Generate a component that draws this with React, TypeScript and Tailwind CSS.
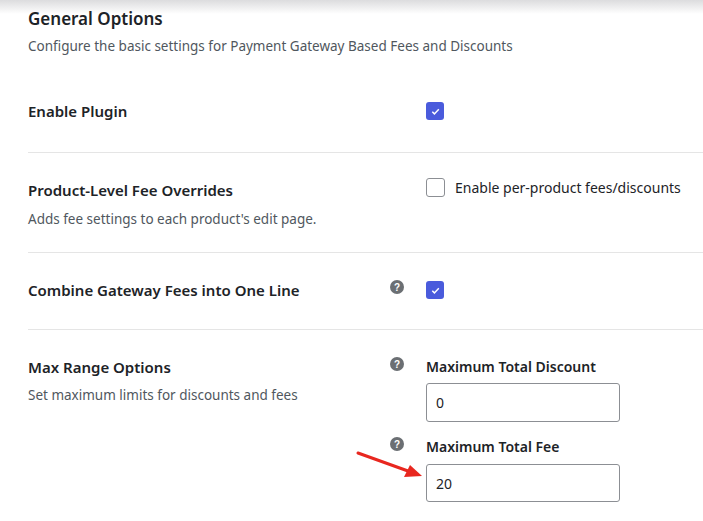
const Help = () => (
  <svg width="14" height="14" viewBox="0 0 14 14" className="shrink-0">
    <circle cx="7" cy="7" r="7" fill="#6b6f73" />
    <text x="7" y="10.5" textAnchor="middle" fontSize="10" fontWeight="700" fill="#fff" fontFamily="Liberation Sans, sans-serif">?</text>
  </svg>
);

const Check = ({ on }: { on: boolean }) =>
  on ? (
    <span className="w-[18px] h-[18px] rounded-[3px] bg-[#4a5bdc] flex items-center justify-center">
      <svg width="11" height="11" viewBox="0 0 12 12" fill="none" stroke="#fff" strokeWidth="1.6">
        <path d="M2.5 6.3l2.3 2.3L9.6 3.5" />
      </svg>
    </span>
  ) : (
    <span className="w-[19px] h-[19px] rounded-[3px] border border-[#8c8f94] bg-white" />
  );

export default function App() {
  return (
    <div className="relative w-[703px] h-[521px] bg-white overflow-hidden text-[#1d2327]" style={{ fontFamily: '"Noto Sans", "Open Sans", sans-serif' }}>
      <div className="absolute inset-x-0 top-0 h-[14px] bg-gradient-to-b from-[#dcdcde] to-white" />
      <div className="relative pl-[28px]">
        <div className="pt-[7px] h-[60px]">
          <h2 className="text-[17px] font-semibold leading-[24px]">General Options</h2>
          <p className="text-[13.5px] text-[#50575e] leading-[20px] mt-[5px]">Configure the basic settings for Payment Gateway Based Fees and Discounts</p>
        </div>

        <div className="flex items-center pt-[40px] pb-[30px] border-b border-[#e5e5e5]">
          <div className="w-[362px] text-[15px] font-semibold leading-[22px]">Enable Plugin</div>
          <div className="w-[36px]" />
          <Check on />
        </div>

        <div className="flex pt-[26px] pb-[23px] border-b border-[#e5e5e5]">
          <div className="w-[362px]">
            <div className="text-[15px] font-semibold leading-[22px]">Product-Level Fee Overrides</div>
            <div className="text-[13.5px] text-[#50575e] leading-[20px] mt-[8px]">Adds fee settings to each product's edit page.</div>
          </div>
          <div className="w-[36px]" />
          <div className="flex items-center gap-[10px] h-[20px] -mt-[2px]">
            <Check on={false} />
            <span className="text-[14px] text-[#1d2327]">Enable per-product fees/discounts</span>
          </div>
        </div>

        <div className="flex items-center pt-[26px] pb-[28px] border-b border-[#e5e5e5]">
          <div className="w-[362px] text-[15px] font-semibold leading-[22px]">Combine Gateway Fees into One Line</div>
          <div className="w-[36px] -mt-[6px]"><Help /></div>
          <Check on />
        </div>

        <div className="flex pt-[26px]">
          <div className="w-[362px]">
            <div className="text-[15px] font-semibold leading-[22px]">Max Range Options</div>
            <div className="text-[13.5px] text-[#50575e] leading-[20px] mt-[7px]">Set maximum limits for discounts and fees</div>
          </div>
          <div className="flex flex-col">
            <div className="flex">
              <div className="w-[36px] pt-[1px]"><Help /></div>
              <div>
                <div className="text-[14px] font-semibold leading-[22px]">Maximum Total Discount</div>
                <div className="mt-[5px] w-[194px] h-[39px] border border-[#8c8f94] rounded-[3px] flex items-center px-[9px] text-[14px]">0</div>
              </div>
            </div>
            <div className="flex mt-[14px]">
              <div className="w-[36px] pt-[1px]"><Help /></div>
              <div>
                <div className="text-[14px] font-semibold leading-[22px]">Maximum Total Fee</div>
                <div className="mt-[6px] w-[194px] h-[38px] border border-[#8c8f94] rounded-[3px] flex items-center px-[9px] text-[14px]">20</div>
              </div>
            </div>
          </div>
        </div>
      </div>
      <svg className="absolute left-0 top-0 pointer-events-none" width="703" height="521">
        <line x1="358" y1="453" x2="408" y2="471" stroke="#e8271f" strokeWidth="3" strokeLinecap="round" />
        <polygon points="422,476 404,477 410,465" fill="#e8271f" />
      </svg>
    </div>
  );
}
